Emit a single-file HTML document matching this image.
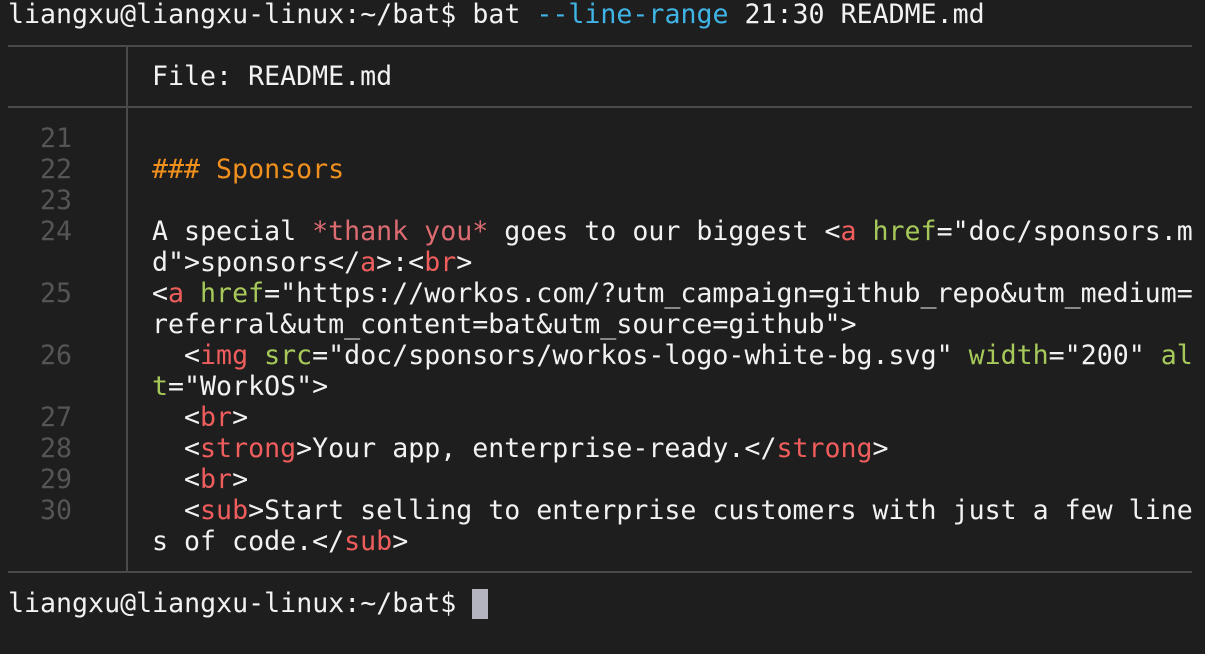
<!DOCTYPE html>
<html><head><meta charset="utf-8"><style>
body{margin:0;width:1205px;height:654px;background:#1e1e1e;overflow:hidden;font-family:"DejaVu Sans Mono","Liberation Mono",monospace;font-size:26.6px;color:#f2f2f2;}
.l{position:absolute;height:31px;line-height:31px;white-space:pre;}
.n{position:absolute;width:72px;left:0;text-align:right;color:#555;height:31px;line-height:31px;}
.h{position:absolute;left:8px;width:1184px;height:2px;background:#4a4a4a;}
.v{position:absolute;left:126px;width:2px;background:#4a4a4a;}
.o{color:#f0901f}.p{color:#dc6b72}.r{color:#f05d5d}.g{color:#a6c95a}.c{color:#40b4e6}
</style></head><body>
<div class="l" style="left:8px;top:-1px">liangxu@liangxu-linux:~/bat$ bat <span class="c">--line-range</span> 21:30 README.md</div>
<div class="h" style="top:45px"></div>
<div class="v" style="top:46px;height:525px"></div>
<div class="l" style="left:152px;top:61px">File: README.md</div>
<div class="h" style="top:106px"></div>
<div class="n" style="top:123px">21</div>
<div class="n" style="top:154px">22</div><div class="l" style="left:152px;top:154px"><span class="o">### Sponsors</span></div>
<div class="n" style="top:185px">23</div>
<div class="n" style="top:216px">24</div><div class="l" style="left:152px;top:216px">A special <span class="p">*thank you*</span> goes to our biggest &lt;<span class="r">a</span> <span class="g">href</span>="doc/sponsors.m</div>
<div class="l" style="left:152px;top:247px">d"&gt;sponsors&lt;/<span class="r">a</span>&gt;:&lt;<span class="r">br</span>&gt;</div>
<div class="n" style="top:278px">25</div><div class="l" style="left:152px;top:278px">&lt;<span class="r">a</span> <span class="g">href</span>="https://workos.com/?utm_campaign=github_repo&amp;utm_medium=</div>
<div class="l" style="left:152px;top:309px">referral&amp;utm_content=bat&amp;utm_source=github"&gt;</div>
<div class="n" style="top:340px">26</div><div class="l" style="left:152px;top:340px">  &lt;<span class="r">img</span> <span class="g">src</span>="doc/sponsors/workos-logo-white-bg.svg" <span class="g">width</span>="200" <span class="g">al</span></div>
<div class="l" style="left:152px;top:371px"><span class="g">t</span>="WorkOS"&gt;</div>
<div class="n" style="top:402px">27</div><div class="l" style="left:152px;top:402px">  &lt;<span class="r">br</span>&gt;</div>
<div class="n" style="top:433px">28</div><div class="l" style="left:152px;top:433px">  &lt;<span class="r">strong</span>&gt;Your app, enterprise-ready.&lt;/<span class="r">strong</span>&gt;</div>
<div class="n" style="top:464px">29</div><div class="l" style="left:152px;top:464px">  &lt;<span class="r">br</span>&gt;</div>
<div class="n" style="top:495px">30</div><div class="l" style="left:152px;top:495px">  &lt;<span class="r">sub</span>&gt;Start selling to enterprise customers with just a few line</div>
<div class="l" style="left:152px;top:526px">s of code.&lt;/<span class="r">sub</span>&gt;</div>
<div class="h" style="top:571px"></div>
<div class="l" style="left:8px;top:588px">liangxu@liangxu-linux:~/bat$ </div>
<div style="position:absolute;left:472px;top:589px;width:16px;height:30px;background:#b4b4c0"></div>
</body></html>
